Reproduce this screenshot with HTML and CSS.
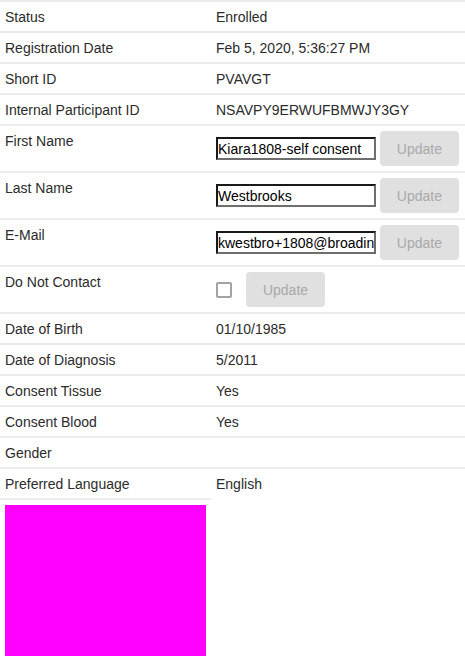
FILE: index.html
```html
<!DOCTYPE html>
<html>
<head>
<meta charset="utf-8">
<link rel="stylesheet" href="styles.css">
</head>
<body>
<table class="info">
  <tr><td class="label">Status</td><td class="value">Enrolled</td></tr>
  <tr><td class="label">Registration Date</td><td class="value">Feb 5, 2020, 5:36:27 PM</td></tr>
  <tr><td class="label">Short ID</td><td class="value">PVAVGT</td></tr>
  <tr><td class="label">Internal Participant ID</td><td class="value">NSAVPY9ERWUFBMWJY3GY</td></tr>
  <tr><td class="label">First Name</td><td class="value ctrl"><input class="field" type="text" value="Kiara1808-self consent"> <button class="btn" disabled>Update</button></td></tr>
  <tr><td class="label">Last Name</td><td class="value ctrl"><input class="field" type="text" value="Westbrooks"> <button class="btn" disabled>Update</button></td></tr>
  <tr><td class="label">E-Mail</td><td class="value ctrl"><input class="field" type="text" value="kwestbro+1808@broadinstitute.org"> <button class="btn" disabled>Update</button></td></tr>
  <tr><td class="label">Do Not Contact</td><td class="value ctrl"><input class="check" type="checkbox"><button class="btn" disabled>Update</button></td></tr>
  <tr><td class="label">Date of Birth</td><td class="value">01/10/1985</td></tr>
  <tr><td class="label">Date of Diagnosis</td><td class="value">5/2011</td></tr>
  <tr><td class="label">Consent Tissue</td><td class="value">Yes</td></tr>
  <tr><td class="label">Consent Blood</td><td class="value">Yes</td></tr>
  <tr><td class="label">Gender</td><td class="value"></td></tr>
  <tr><td class="label">Preferred Language</td><td class="value">English</td></tr>
  <tr><td class="label ctrl"><div class="picture"></div></td></tr>
</table>
</body>
</html>
```

FILE: styles.css
```css
html, body {
  margin: 0;
  padding: 0;
  background: #fff;
}
body {
  font-family: "Liberation Sans", Arial, sans-serif;
  font-size: 14px;
  color: #2b2b2b;
}
.info {
  width: 465px;
  border-collapse: collapse;
  border-spacing: 0;
}
.info td {
  border-top: 2px solid #ececec;
  padding: 6px 5px 4px 5px;
  line-height: 19px;
  vertical-align: top;
  text-align: left;
}
.info td.ctrl {
  padding: 5px;
}
.label {
  width: 201px;
}
.value {
  white-space: nowrap;
}
.field {
  box-sizing: border-box;
  width: 160px;
  height: 23px;
  margin: 0;
  padding: 0;
  border: 2px inset #6e6e6e;
  font-family: "Liberation Sans", Arial, sans-serif;
  font-size: 14px;
  color: #000;
  vertical-align: middle;
  background: #fff;
}
.btn {
  box-sizing: border-box;
  width: 79px;
  height: 35px;
  margin: 0;
  padding: 0;
  border: none;
  border-radius: 4px;
  background: #e0e0e0;
  color: #a9a9a9;
  font-family: "Liberation Sans", Arial, sans-serif;
  font-size: 14px;
  vertical-align: middle;
}
.check {
  appearance: none;
  -webkit-appearance: none;
  box-sizing: border-box;
  width: 16px;
  height: 16px;
  margin: 0 14px 0 0;
  border: 2px solid #a3a3a3;
  border-radius: 2px;
  background: #fff;
  vertical-align: middle;
}
.picture {
  width: 201px;
  height: 151px;
  background: #ff00ff;
}
```
